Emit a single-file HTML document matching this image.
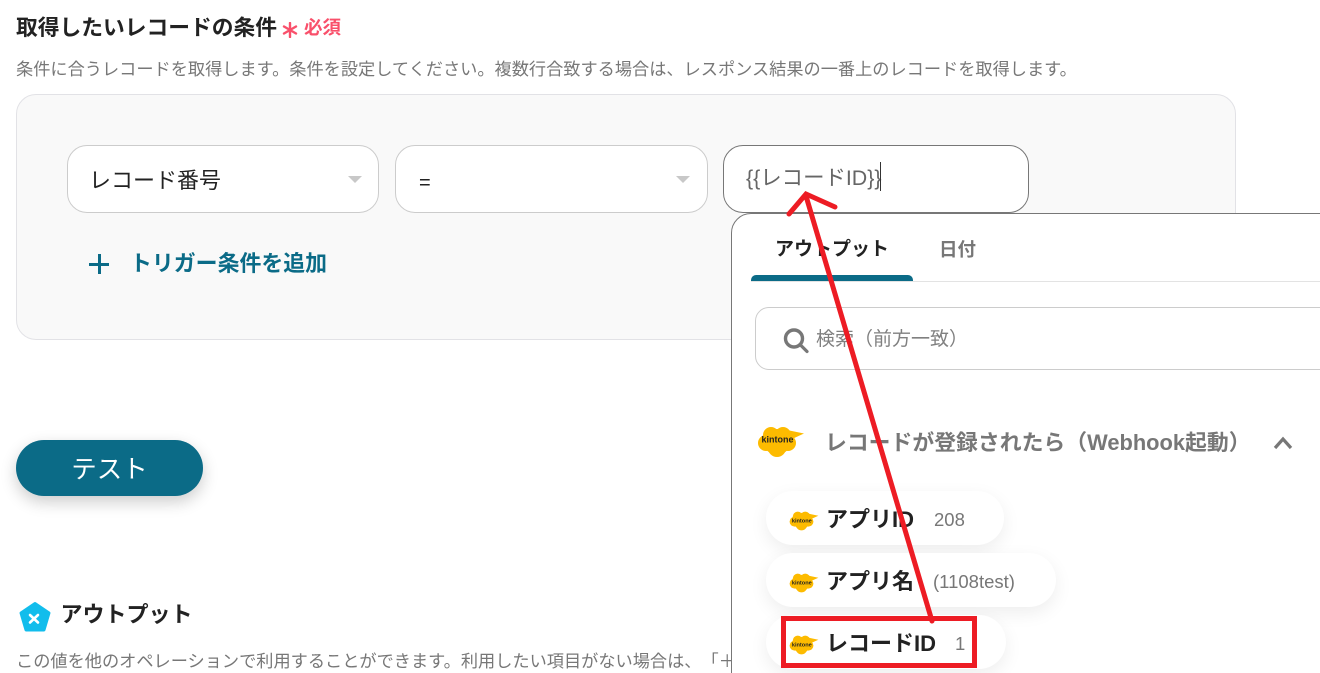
<!DOCTYPE html>
<html lang="ja"><head><meta charset="utf-8"><style>
html,body{margin:0;padding:0;background:#fff}
#p{position:relative;width:1320px;height:673px;overflow:hidden;background:#fff;font-family:"Liberation Sans","Noto Sans CJK JP",sans-serif;color:#222;text-spacing-trim:space-all}
#p div{position:absolute;box-sizing:border-box;white-space:nowrap}
.sel{background:#fff;border:1px solid #ccc;border-radius:20px;height:68px;top:145px}
.tri{width:0;height:0;border-left:7px solid transparent;border-right:7px solid transparent;border-top:7px solid #c8c8c8;top:176px}
.pill{background:#fff;border-radius:27px;height:54px;left:766px;box-shadow:0 6px 18px rgba(0,0,0,.07)}
.b{font-weight:700;font-size:22px;line-height:30px;color:#222;left:826px}
.v{font-size:18.5px;line-height:24px;color:#777}
</style></head><body><div id="p">
<svg width="0" height="0" style="position:absolute"><defs><g id="k"><path d="M30 7L47 10.500L35 16Z" fill="#fdbb00"/><g fill="#fdbb00"><circle cx="20" cy="19" r="13"/><circle cx="14" cy="12" r="8"/><circle cx="26" cy="12" r="8"/><circle cx="9" cy="20" r="8"/><circle cx="20" cy="25" r="9"/><circle cx="31" cy="20" r="8"/></g></g></defs></svg>
<div style="left:16px;top:13px;font-size:21.75px;font-weight:700;line-height:30px;color:#222">取得したいレコードの条件</div>
<svg style="position:absolute;left:282px;top:22px" width="16" height="16" viewBox="0 0 16 16"><path d="M8 1V15M2 4.500L14 11.500M14 4.500L2 11.500" stroke="#f9506b" stroke-width="2.400" stroke-linecap="round" fill="none"/></svg>
<div style="left:304px;top:15px;font-size:18.500px;font-weight:700;line-height:26px;color:#f9506b">必須</div>
<div style="left:16px;top:57px;font-size:17.2px;line-height:24px;color:#777">条件に合うレコードを取得します。条件を設定してください。複数行合致する場合は、レスポンス結果の一番上のレコードを取得します。</div>
<div style="left:16px;top:94px;width:1220px;height:246px;background:#f9f9f9;border:1px solid #e2e2e6;border-radius:20px"></div>
<div class="sel" style="left:67px;width:312px"></div>
<div style="left:89px;top:165px;font-size:22px;line-height:32px;color:#222">レコード番号</div>
<div class="tri" style="left:348px"></div>
<div class="sel" style="left:395px;width:313px"></div>
<div style="left:419px;top:168px;font-size:20px;line-height:30px;color:#222">=</div>
<div class="tri" style="left:676px"></div>
<div class="sel" style="left:723px;width:306px;border-color:#777"></div>
<div style="left:746px;top:162px;font-size:21.4px;line-height:32px;color:#666">{{レコードID}}</div>
<div style="left:880px;top:162px;width:1px;height:29px;background:#333"></div>
<div style="left:89px;top:263px;width:20px;height:3px;background:#0b6b87"></div>
<div style="left:97.5px;top:254px;width:3px;height:20px;background:#0b6b87"></div>
<div style="left:130px;top:249px;font-size:21.9px;font-weight:700;line-height:30px;color:#0b6b87">トリガー条件を追加</div>
<div style="left:16px;top:440px;width:187px;height:56px;background:#0b6b87;border-radius:28px;box-shadow:0 6px 16px rgba(0,0,0,.2)"></div>
<div style="left:16px;top:442px;width:187px;color:#fff;font-size:25.5px;line-height:56px;text-align:center">テスト</div>
<svg style="position:absolute;left:18px;top:601px" width="34" height="32" viewBox="0 0 34 32"><path d="M17 2.500L31 12L26 29H8L3 12Z" fill="#12bdec" stroke="#12bdec" stroke-width="3" stroke-linejoin="round"/><path d="M12 14L20 21.500M20 14L12 21.500" stroke="#fff" stroke-width="2.600" stroke-linecap="round"/></svg>
<div style="left:60.500px;top:599px;font-size:22px;font-weight:700;line-height:32px;color:#222">アウトプット</div>
<div style="left:16px;top:649px;font-size:17.2px;line-height:24px;color:#777">この値を他のオペレーションで利用することができます。利用したい項目がない場合は、「＋</div>

<div style="left:731px;top:213px;width:620px;height:480px;background:#fff;border:1px solid #777;border-radius:20px"></div>
<div style="left:775px;top:236px;font-size:19px;font-weight:700;line-height:28px;color:#222">アウトプット</div>
<div style="left:939px;top:236px;font-size:18.500px;font-weight:700;line-height:28px;color:#777">日付</div>
<div style="left:751px;top:281px;width:569px;height:1px;background:#e3e3e3"></div>
<div style="left:751px;top:275px;width:162px;height:6px;background:#0b6b87;border-radius:5px 5px 0 0"></div>
<div style="left:755px;top:307px;width:600px;height:63px;border:1px solid #ccc;border-radius:14px;background:#fff"></div>
<svg style="position:absolute;left:782px;top:326px" width="28" height="28" viewBox="0 0 28 28"><circle cx="12" cy="12.5" r="8.500" fill="none" stroke="#777" stroke-width="3.400"/><path d="M18.500 19L25 25.500" stroke="#777" stroke-width="3.200" stroke-linecap="round"/></svg>
<div style="left:816px;top:327px;font-size:19px;line-height:26px;color:#808080">検索（前方一致）</div>

<svg style="position:absolute;left:757px;top:423px" width="48" height="38" viewBox="0 0 48 38"><use href="#k"/><text x="20.500" y="19.500" font-size="9" font-weight="700" text-anchor="middle" font-family="Liberation Sans" fill="#222">kintone</text></svg>
<div style="left:825px;top:427px;font-size:21.85px;font-weight:700;line-height:32px;color:#777">レコードが登録されたら（Webhook起動）</div>
<svg style="position:absolute;left:1272px;top:435px" width="22" height="16" viewBox="0 0 22 16"><path d="M3 13L11 4L19 13" fill="none" stroke="#777" stroke-width="3.200"/></svg>

<div class="pill" style="top:491px;width:238px"></div>
<div class="pill" style="top:553px;width:290px"></div>
<div class="pill" style="top:615px;width:240px"></div>
<svg style="position:absolute;left:789px;top:509px" width="30" height="24" viewBox="0 0 48 38"><use href="#k"/><text x="20.500" y="21" font-size="9" font-weight="700" text-anchor="middle" font-family="Liberation Sans" fill="#222">kintone</text></svg>
<svg style="position:absolute;left:789px;top:571px" width="30" height="24" viewBox="0 0 48 38"><use href="#k"/><text x="20.500" y="21" font-size="9" font-weight="700" text-anchor="middle" font-family="Liberation Sans" fill="#222">kintone</text></svg>
<svg style="position:absolute;left:789px;top:633px" width="30" height="24" viewBox="0 0 48 38"><use href="#k"/><text x="20.500" y="21" font-size="9" font-weight="700" text-anchor="middle" font-family="Liberation Sans" fill="#222">kintone</text></svg>
<div class="b" style="top:505px">アプリID</div><div class="v" style="left:934px;top:508px">208</div>
<div class="b" style="top:567px">アプリ名</div><div class="v" style="left:933px;top:570px">(1108test)</div>
<div class="b" style="top:629px">レコードID</div><div class="v" style="left:955px;top:632px">1</div>

<svg style="position:absolute;left:0;top:0" width="1320" height="673" viewBox="0 0 1320 673"><g fill="none" stroke="#ed1c24" stroke-width="5"><path d="M932 621L806 196" stroke-linecap="round"/><path d="M789 214L806 194L835 207" stroke-linecap="round"/><rect x="783.5" y="618.5" width="191" height="47" stroke-width="5"/></g></svg>
</div></body></html>
